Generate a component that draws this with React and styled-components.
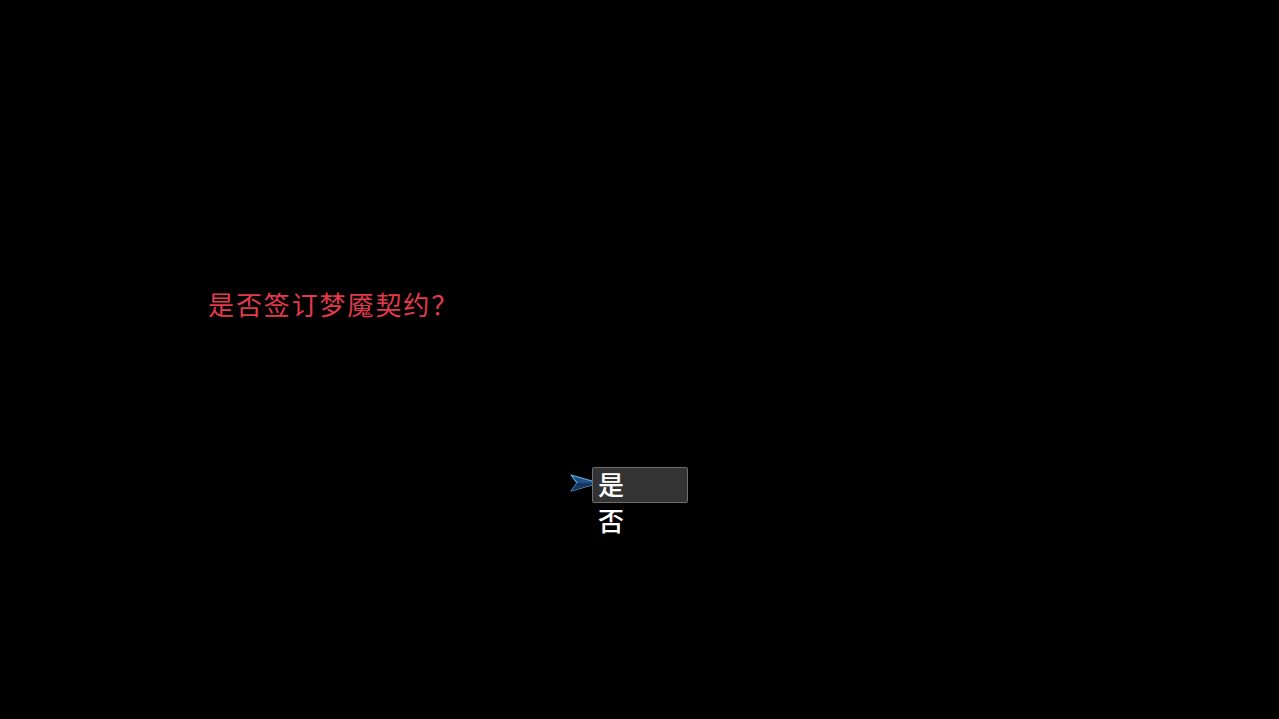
import styled, { createGlobalStyle } from 'styled-components'

const GlobalStyle = createGlobalStyle`
    html, body {
        margin: 0;
        padding: 0;
        background: #000000;
    }
`

const StyledScreen = styled.div`
    width: 1279px;
    height: 719px;
    background-color: #000000;
    overflow: hidden;
    font-family: "Noto Sans CJK SC", "Noto Sans", sans-serif;
    display: flex;
    flex-direction: column;
`

const StyledQuestion = styled.p`
    margin: 0;
    padding: 285px 0 0 208px;
    color: #e23a4c;
    font-size: 26px;
    line-height: 38px;
    letter-spacing: 1.9px;
`

const StyledMenu = styled.div`
    margin: 144px 0 0 570px;
    display: flex;
    flex-direction: column;
`

const StyledRow = styled.div`
    display: flex;
    align-items: center;
    height: 36px;
`

const StyledCursor = styled.div`
    width: 22px;
    display: flex;
    align-items: center;
    padding-bottom: 4px;
    visibility: ${props => (props.$show ? 'visible' : 'hidden')};
`

const StyledOption = styled.div`
    box-sizing: border-box;
    width: 96px;
    height: 36px;
    padding: 0 0 4px 5px;
    display: flex;
    align-items: center;
    color: #ffffff;
    font-size: 26px;
    font-weight: 500;
    background-color: ${props => (props.$active ? '#333333' : 'transparent')};
    border: 1px solid ${props => (props.$active ? '#6e6e6e' : 'transparent')};
    border-radius: 2px;
`

function Cursor() {
    return (
        <svg width="30" height="18" viewBox="0 0 30 18" style={{ marginRight: -8 }}>
            <path
                d="M1 1 L29 9 L1 17 L7 9 Z"
                fill="#1f4f86"
                stroke="#58b6e6"
                strokeWidth="1.2"
                strokeLinejoin="round"
            />
            <path d="M7 9 L29 9 L1 17 Z" fill="#16375f" />
        </svg>
    )
}

export default function App() {
    const options = ['是', '否']
    return (
        <StyledScreen>
            <GlobalStyle />
            <StyledQuestion>是否签订梦魇契约？</StyledQuestion>
            <StyledMenu>
                {options.map((label, i) => (
                    <StyledRow key={label}>
                        <StyledCursor $show={i === 0}>
                            <Cursor />
                        </StyledCursor>
                        <StyledOption $active={i === 0}>{label}</StyledOption>
                    </StyledRow>
                ))}
            </StyledMenu>
        </StyledScreen>
    )
}
